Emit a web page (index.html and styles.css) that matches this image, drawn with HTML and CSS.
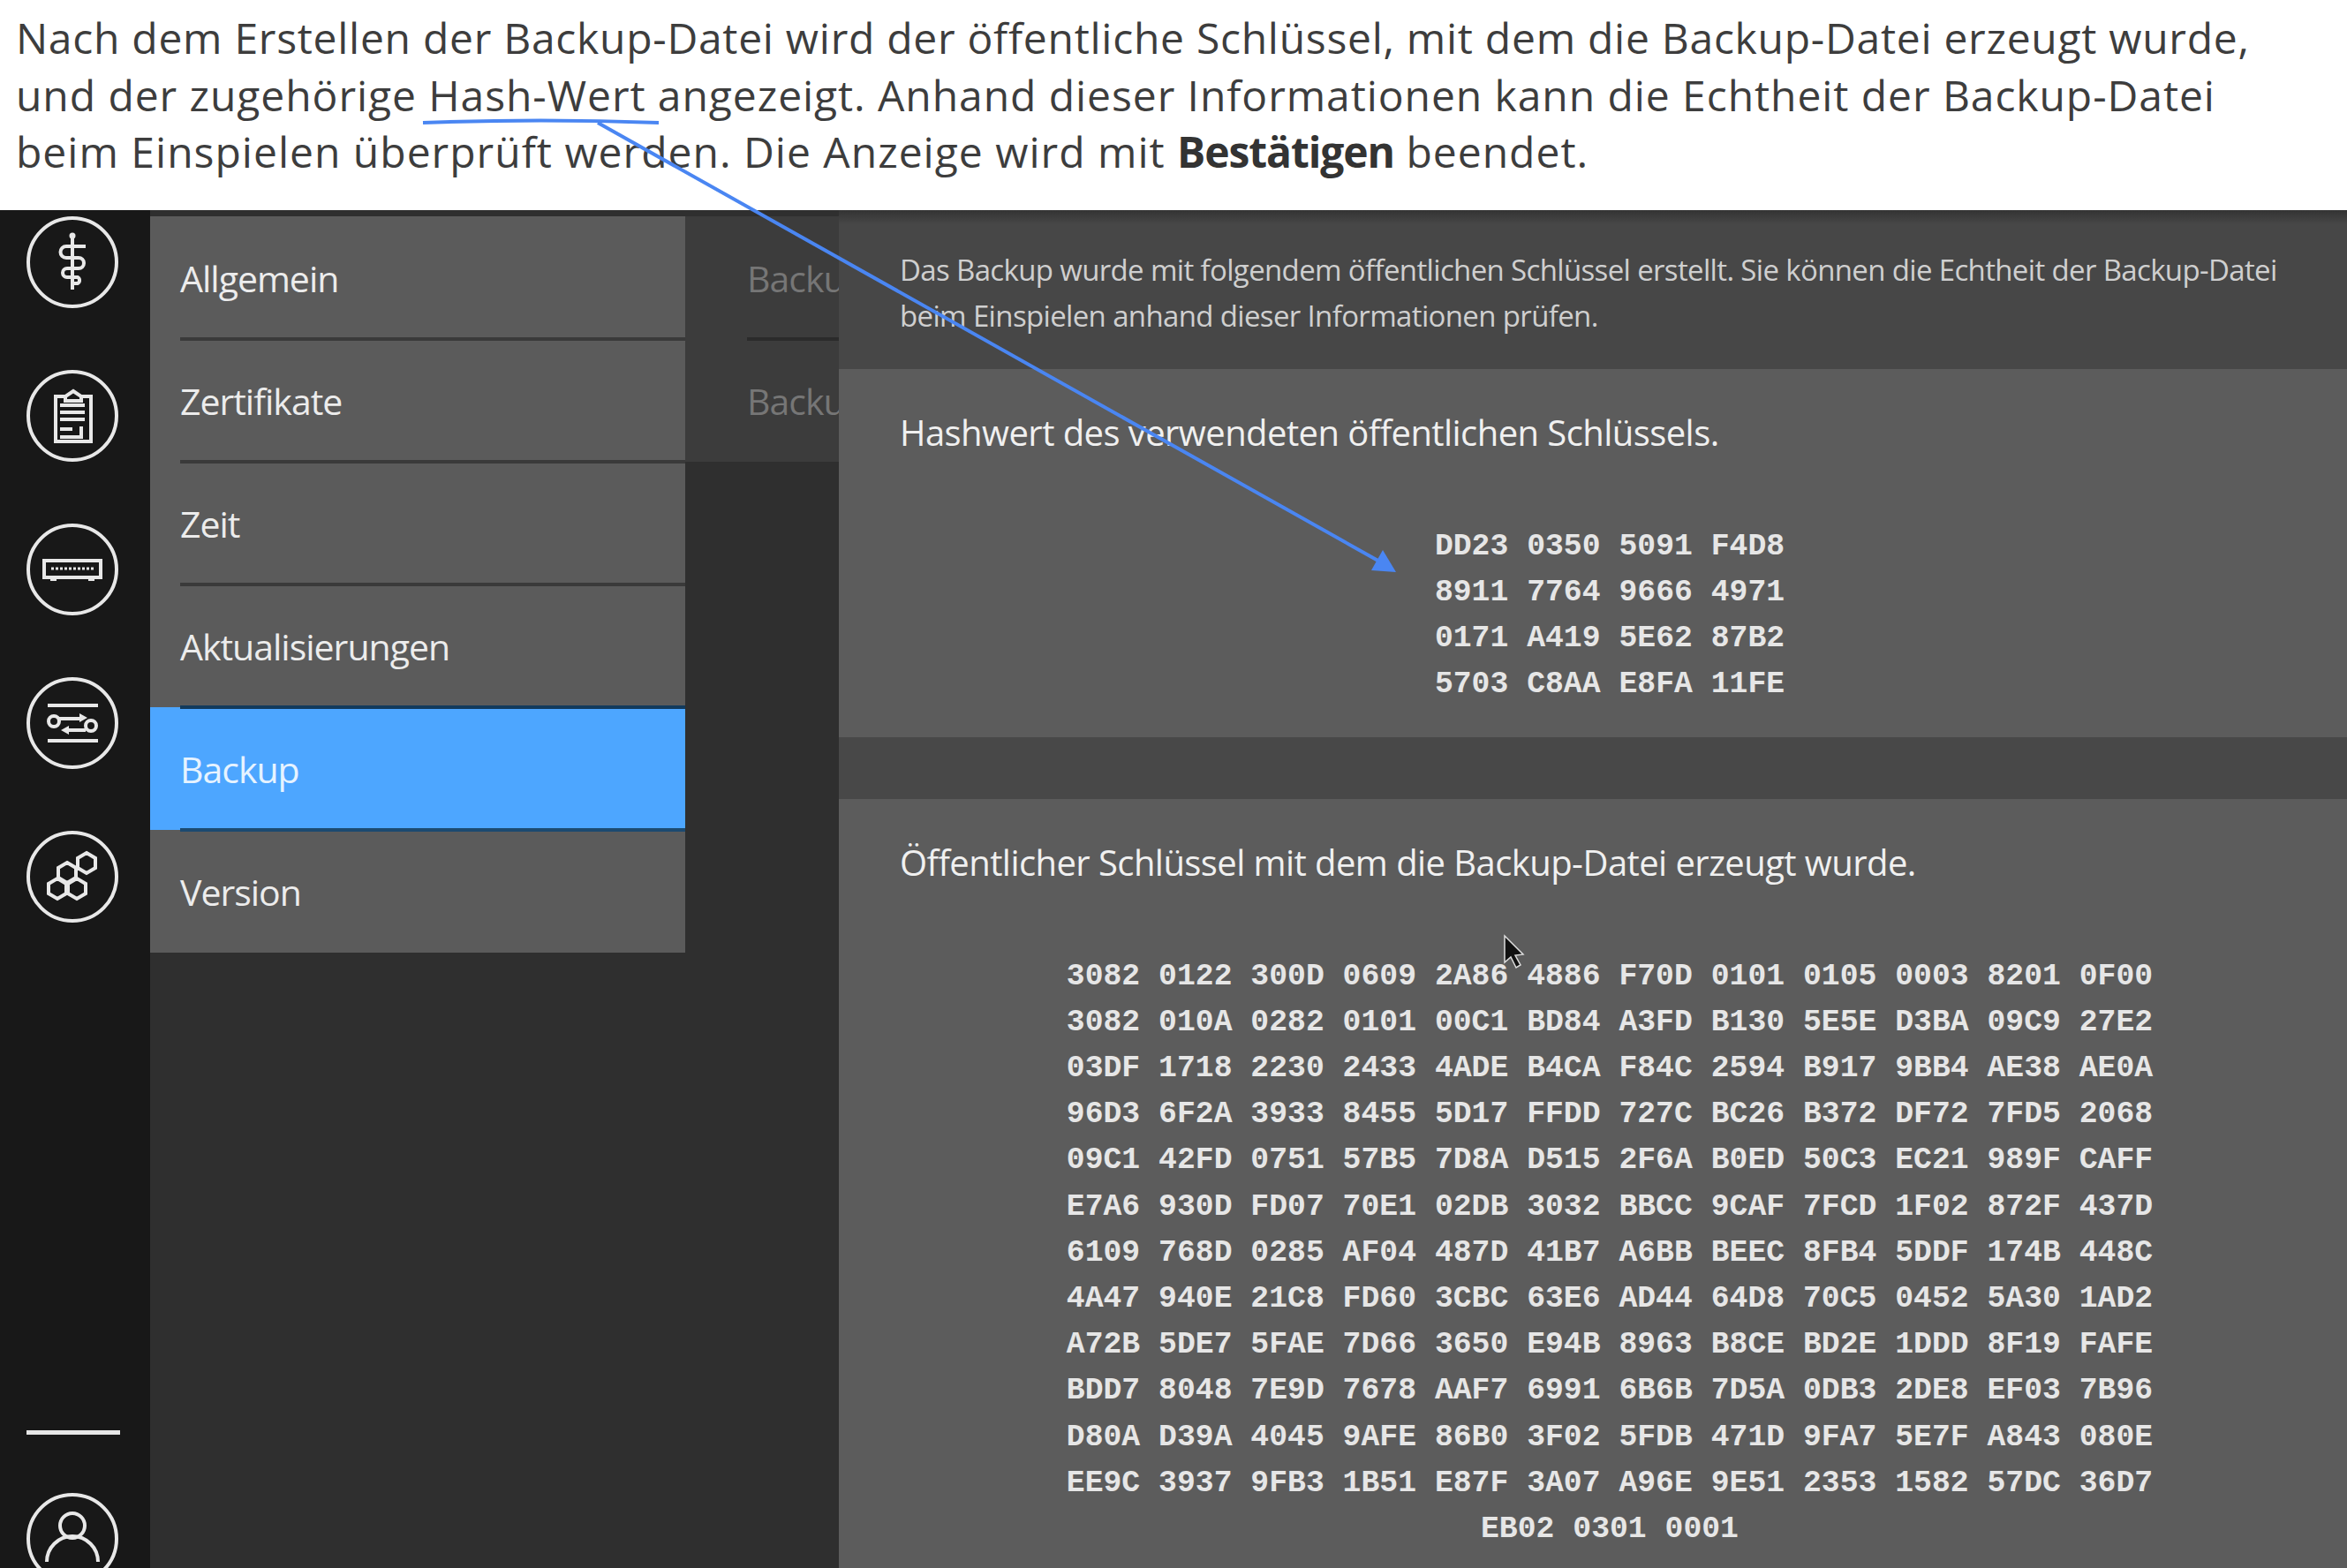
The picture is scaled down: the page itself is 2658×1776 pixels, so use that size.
FILE: index.html
```html
<!DOCTYPE html>
<html lang="de">
<head>
<meta charset="utf-8">
<title>Backup</title>
<link rel="stylesheet" href="styles.css">
</head>
<body>
<div class="page">
  <header class="intro">
    <p>Nach dem Erstellen der Backup-Datei wird der öffentliche Schlüssel, mit dem die Backup-Datei erzeugt wurde,<br><span class="line-two">und der zugehörige Hash-Wert angezeigt. Anhand dieser Informationen kann die Echtheit der Backup-Datei</span><br><span class="line-three">beim Einspielen überprüft werden. Die Anzeige wird mit <strong>Bestätigen</strong> beendet.</span></p>
  </header>
  <div class="app">
    <nav class="rail">
      <svg class="ico" viewBox="0 0 104 104"><circle cx="52" cy="52" r="50"/><path d="M52 22V83"/><circle class="dot" cx="52" cy="22" r="3.5"/><path d="M67 34H45a6 6 0 0 0 0 13H59a6 6 0 0 1 0 12H46a5 5 0 0 0 0 10H58a4 4 0 0 1 0 7H52"/></svg>
      <svg class="ico" viewBox="0 0 104 104"><circle cx="52" cy="52" r="50"/><path d="M44 30H33V81H73V30H62"/><path d="M44 35V30L53 24L62 30V35Z"/><path d="M38 40H66M38 48H66M38 56H66M38 67H52"/><path d="M62 64V76H38"/></svg>
      <svg class="ico" viewBox="0 0 104 104"><circle cx="52" cy="52" r="50"/><rect x="20" y="42" width="64" height="19"/><path class="thin" d="M28 51H76" stroke-dasharray="3 2"/><path d="M27 63h7M70 63h7"/></svg>
      <svg class="ico" viewBox="0 0 104 104"><circle cx="52" cy="52" r="50"/><path d="M24 32H81M24 72H81"/><circle cx="31" cy="50" r="6"/><circle cx="73" cy="55" r="6"/><path d="M37 47H62M67 60H44"/><path class="dot" d="M60 41L69 46L60 51ZM48 55L39 60L48 65Z"/></svg>
      <svg class="ico" viewBox="0 0 104 104"><circle cx="52" cy="52" r="50"/><path d="M68 25l10 6v11l-10 6l-10-6V31ZM46 36l10 6v11l-10 6l-10-6V42ZM35 54l10 6v11l-10 6l-10-6V60ZM57 54l10 6v11l-10 6l-10-6V60Z"/></svg>
      <div class="rule"></div>
      <svg class="ico" viewBox="0 0 104 104"><circle cx="52" cy="52" r="50"/><circle cx="52" cy="37" r="14"/><path d="M23 78a29 29 0 0 1 58 0"/></svg>
    </nav>
    <ul class="menu">
      <li class="row">Allgemein</li>
      <li class="row">Zertifikate</li>
      <li class="row">Zeit</li>
      <li class="row">Aktualisierungen</li>
      <li class="row active">Backup</li>
      <li class="row">Version</li>
    </ul>
    <ul class="sub">
      <li class="subrow">Backup</li>
      <li class="subrow">Backup</li>
    </ul>
    <main class="pane">
      <section class="note">
        <p>Das Backup wurde mit folgendem öffentlichen Schlüssel erstellt. Sie können die Echtheit der Backup-Datei<br>beim Einspielen anhand dieser Informationen prüfen.</p>
      </section>
      <section class="card hash">
        <h2>Hashwert des verwendeten öffentlichen Schlüssels.</h2>
        <div class="mono">
          <div>DD23 0350 5091 F4D8</div>
          <div>8911 7764 9666 4971</div>
          <div>0171 A419 5E62 87B2</div>
          <div>5703 C8AA E8FA 11FE</div>
        </div>
      </section>
      <section class="card key">
        <h2>Öffentlicher Schlüssel mit dem die Backup-Datei erzeugt wurde.</h2>
        <div class="mono">
          <div>3082 0122 300D 0609 2A86 4886 F70D 0101 0105 0003 8201 0F00</div>
          <div>3082 010A 0282 0101 00C1 BD84 A3FD B130 5E5E D3BA 09C9 27E2</div>
          <div>03DF 1718 2230 2433 4ADE B4CA F84C 2594 B917 9BB4 AE38 AE0A</div>
          <div>96D3 6F2A 3933 8455 5D17 FFDD 727C BC26 B372 DF72 7FD5 2068</div>
          <div>09C1 42FD 0751 57B5 7D8A D515 2F6A B0ED 50C3 EC21 989F CAFF</div>
          <div>E7A6 930D FD07 70E1 02DB 3032 BBCC 9CAF 7FCD 1F02 872F 437D</div>
          <div>6109 768D 0285 AF04 487D 41B7 A6BB BEEC 8FB4 5DDF 174B 448C</div>
          <div>4A47 940E 21C8 FD60 3CBC 63E6 AD44 64D8 70C5 0452 5A30 1AD2</div>
          <div>A72B 5DE7 5FAE 7D66 3650 E94B 8963 B8CE BD2E 1DDD 8F19 FAFE</div>
          <div>BDD7 8048 7E9D 7678 AAF7 6991 6B6B 7D5A 0DB3 2DE8 EF03 7B96</div>
          <div>D80A D39A 4045 9AFE 86B0 3F02 5FDB 471D 9FA7 5E7F A843 080E</div>
          <div>EE9C 3937 9FB3 1B51 E87F 3A07 A96E 9E51 2353 1582 57DC 36D7</div>
          <div>EB02 0301 0001</div>
        </div>
      </section>
    </main>
  </div>
  <svg class="overlay" viewBox="0 0 2658 1776">
    <path class="cursor" d="M1704 1060V1090L1711 1084L1717 1096L1722 1093L1716 1082L1725 1081Z"/>
    <path class="callout" d="M479 139Q612 134 746 139"/>
    <path class="callout" d="M677 139L1566 638"/>
    <path class="head" d="M1581 648L1566 623L1553 646Z"/>
  </svg>
</div>
</body>
</html>
```
FILE: styles.css
```css
* { box-sizing: border-box; }
html, body { margin: 0; padding: 0; background: #fff; }
.page { position: relative; width: 2658px; height: 1776px; overflow: hidden; display: flex; flex-direction: column; }

.intro { height: 238px; padding: 11px 18px 0; flex: none; background: #fff; }
.intro p { margin: 0; font: 400 48px/64.5px "Open Sans", sans-serif; letter-spacing: 0.72px; color: #3d3d3d; white-space: nowrap; }
.line-two { letter-spacing: 0.93px; }
.line-three { letter-spacing: 1px; }
.intro strong { font-weight: 700; letter-spacing: -1.1px; color: #333; }

.app { flex: 1; display: flex; min-height: 0; background: #2f2f2f; filter: blur(0.7px); font-family: "Open Sans", sans-serif; }

.rail { width: 170px; flex: none; background: #181818; padding: 7px 0 0 30px; display: flex; flex-direction: column; gap: 70px; }
.ico { width: 104px; height: 104px; flex: none; fill: none; stroke: #e8e8e8; stroke-width: 4; overflow: visible; }
.ico .dot { fill: #e8e8e8; stroke: none; }
.ico .thin { stroke-width: 3; }
.rule { width: 106px; height: 5px; flex: none; background: #e6e6e6; margin: 505px 0 -4px; }

.menu { list-style: none; margin: 0; padding: 7px 0 0; width: 606px; flex: none; }
.row { height: 139px; margin: 0; padding: 0 0 0 34px; display: flex; align-items: center; background: #5b5b5b; color: #ececec; font-size: 41px; font-weight: 500; letter-spacing: -1px; position: relative; }
.row::after { content: ""; position: absolute; z-index: 1; left: 34px; right: 0; bottom: -2px; height: 4px; background: #3a3a3a; }
.row:last-child::after { display: none; }
.row:nth-child(4)::after { background: #123a5c; }
.row.active { background: #4da6ff; color: #e6f3ff; }
.row.active::after { background: #1c4a70; }

.sub { list-style: none; margin: 0; padding: 7px 0 0; width: 174px; flex: none; overflow: hidden; }
.subrow { height: 139px; padding: 0 0 0 70px; display: flex; align-items: center; background: #3c3c3c; color: #767676; font-size: 41px; font-weight: 500; letter-spacing: -1px; position: relative; white-space: nowrap; }
.subrow::after { content: ""; position: absolute; z-index: 1; left: 70px; right: 0; bottom: -2px; height: 4px; background: #2b2b2b; }
.subrow:last-child::after { display: none; }

.pane { flex: 1; min-width: 0; background: #484848; overflow: hidden; position: relative; z-index: 2; }
.note { height: 180px; padding: 42px 0 0 69px; background: linear-gradient(#333 0, #474747 16px); }
.note p { margin: 0; font-size: 33px; font-weight: 500; line-height: 52px; letter-spacing: -0.65px; color: #cfcfcf; white-space: nowrap; }
.card { background: #5c5c5c; padding: 46px 0 0 69px; }
.card h2 { margin: 0; font-size: 40px; font-weight: 500; line-height: 52px; letter-spacing: -0.57px; color: #f0f0f0; white-space: nowrap; }
.hash { height: 417px; margin-bottom: 70px; }
.key { height: 871px; }
.mono { margin: 76.5px 0 0 -31px; font: 700 34.75px/52.2px "Liberation Mono", monospace; color: #e6e6e6; text-align: center; white-space: nowrap; }

.overlay { position: absolute; left: 0; top: 0; width: 2658px; height: 1776px; pointer-events: none; }
.callout { fill: none; stroke: #4a86f2; stroke-width: 4; }
.head { fill: #4a86f2; }
.cursor { fill: #111; stroke: #ddd; stroke-width: 1.5; }
```
